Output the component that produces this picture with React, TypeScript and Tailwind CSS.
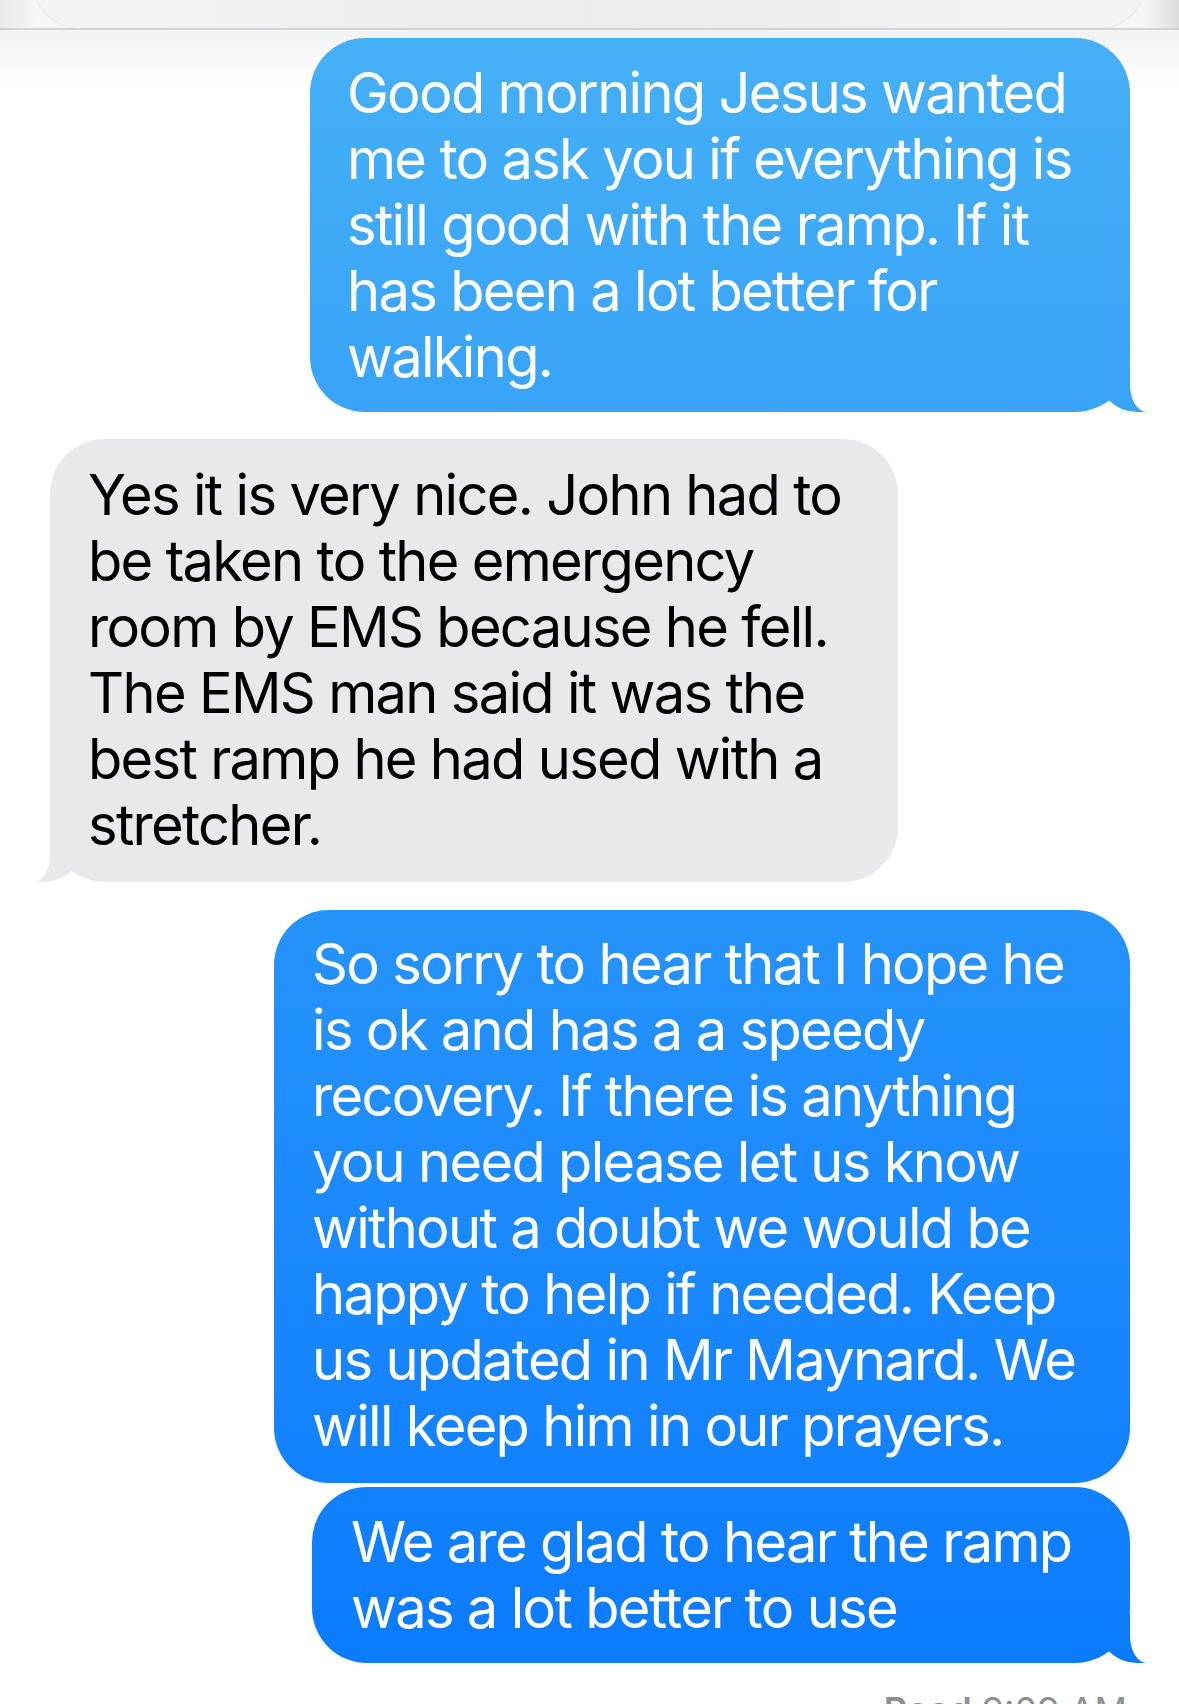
import React from "react";

const blueGrad =
  "bg-fixed bg-[linear-gradient(to_bottom,#47b1f6_0px,#0a7aff_1704px)]";

function SentTail() {
  return (
    <>
      <div
        className={`absolute bottom-0 right-[-17px] w-[50px] h-[50px] rounded-bl-[40px] ${blueGrad}`}
      />
      <div className="absolute bottom-0 right-[-30px] w-[30px] h-[50px] rounded-bl-[17px_27px] bg-white" />
    </>
  );
}

function RecvTail() {
  return (
    <>
      <div className="absolute bottom-0 left-[-16px] w-[50px] h-[50px] rounded-br-[40px] bg-[#e9e9eb]" />
      <div className="absolute bottom-0 left-[-30px] w-[30px] h-[50px] rounded-br-[16px_27px] bg-white" />
    </>
  );
}

function Lines({ lines }: { lines: string[] }) {
  return (
    <div className="relative z-10">
      {lines.map((l, i) => (
        <div key={i} className="whitespace-nowrap">
          {l}
        </div>
      ))}
    </div>
  );
}

export default function App() {
  return (
    <div className="w-[1179px] h-[1704px] overflow-hidden bg-white font-['Inter',sans-serif] text-[56px] leading-[66px] tracking-[-0.03em]">
      {/* top card remnant */}
      <div className="h-[28px] overflow-hidden bg-[linear-gradient(to_right,#e9e9eb,#f6f6f7_3%,#f3f3f5_50%,#f6f6f7_97%,#dcdcde)]">
        <div className="mx-[32px] mt-[-52px] h-[80px] rounded-b-[50px] bg-[linear-gradient(to_right,#f4f4f5,#ececee_50%,#f4f4f5)] shadow-[0_1px_3px_rgba(0,0,0,0.08)]" />
      </div>
      <div className="h-[2px] bg-[#d3d3d6]" />

      <div className="flex flex-col bg-[linear-gradient(to_bottom,#f2f2f3_0px,#ffffff_60px)]">
        {/* bubble 1 */}
        <div
          className={`relative self-end mr-[49px] mt-[8px] w-[820px] rounded-[55px] pl-[37px] py-[22px] text-white ${blueGrad}`}
        >
          <Lines
            lines={[
              "Good morning Jesus wanted",
              "me to ask you if everything is",
              "still good with the ramp. If it",
              "has been a lot better for",
              "walking.",
            ]}
          />
          <SentTail />
        </div>

        {/* gray bubble */}
        <div className="relative self-start ml-[50px] mt-[27px] w-[848px] rounded-[55px] bg-[#e9e9eb] pl-[38px] pt-[23px] pb-[24px] text-black">
          <Lines
            lines={[
              "Yes it is very nice. John had to",
              "be taken to the emergency",
              "room by EMS because he fell.",
              "The EMS man said it was the",
              "best ramp he had used with a",
              "stretcher.",
            ]}
          />
          <RecvTail />
        </div>

        {/* bubble 3 */}
        <div
          className={`relative self-end mr-[49px] mt-[28px] w-[856px] rounded-[55px] pl-[38px] pt-[21px] pb-[24px] text-white ${blueGrad}`}
        >
          <Lines
            lines={[
              "So sorry to hear that I hope he",
              "is ok and has a a speedy",
              "recovery. If there is anything",
              "you need please let us know",
              "without a doubt we would be",
              "happy to help if needed. Keep",
              "us updated in Mr Maynard. We",
              "will keep him in our prayers.",
            ]}
          />
        </div>

        {/* bubble 4 */}
        <div
          className={`relative self-end mr-[49px] mt-[4px] w-[818px] rounded-[55px] pl-[39px] py-[22px] text-white ${blueGrad}`}
        >
          <Lines
            lines={["We are glad to hear the ramp", "was a lot better to use"]}
          />
          <SentTail />
        </div>

        <div className="self-end mr-[52px] mt-[25px] text-[36px] leading-[44px] tracking-normal text-[#8e8e93]">
          <span className="font-semibold">Read</span> 9:09 AM
        </div>
      </div>
    </div>
  );
}
